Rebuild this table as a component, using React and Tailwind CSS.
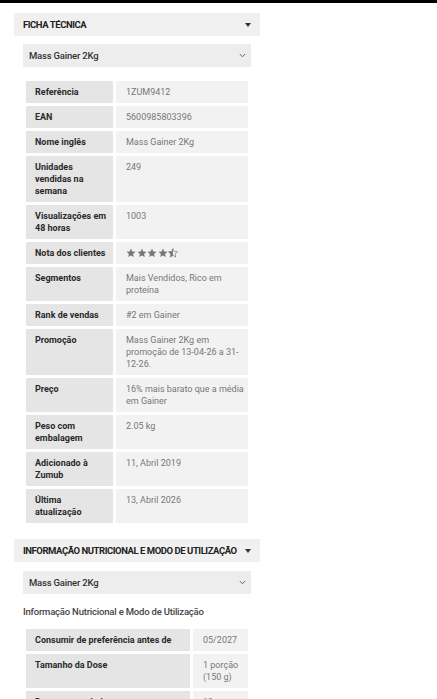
import React from "react";

const font = { fontFamily: "Roboto, 'Liberation Sans', sans-serif" };

function Caret() {
  return (
    <svg width="6" height="4" viewBox="0 0 6 4" className="shrink-0">
      <path d="M0 0 L6 0 L3 4 Z" fill="#333" />
    </svg>
  );
}

function Chevron() {
  return (
    <svg width="7" height="5" viewBox="0 0 7 5" className="shrink-0">
      <path d="M0.8 1 L3.5 3.8 L6.2 1" fill="none" stroke="#666" strokeWidth="1" />
    </svg>
  );
}

function Star({ half }) {
  const d = "M5 0.6 L6.3 3.5 L9.5 3.8 L7.1 5.9 L7.8 9.1 L5 7.4 L2.2 9.1 L2.9 5.9 L0.5 3.8 L3.7 3.5 Z";
  return (
    <svg width="10" height="10" viewBox="0 0 10 10">
      {half ? (
        <>
          <defs>
            <clipPath id="halfclip">
              <rect x="0" y="0" width="5" height="10" />
            </clipPath>
          </defs>
          <path d={d} fill="none" stroke="#888" strokeWidth="0.8" />
          <path d={d} fill="#777" clipPath="url(#halfclip)" />
        </>
      ) : (
        <path d={d} fill="#777" />
      )}
    </svg>
  );
}

function Header({ children }) {
  return (
    <div className="ml-[14px] w-[246px] h-[23px] bg-[#f0f0f0] flex items-center pl-[9px] pr-[9px]">
      <span className="flex-1 text-[9.5px] font-bold text-[#222] tracking-[-0.45px] leading-none whitespace-nowrap">{children}</span>
      <Caret />
    </div>
  );
}

function Select() {
  return (
    <div className="ml-[23px] w-[228px] h-[23px] bg-[#ededed] flex items-center justify-between pl-[6px] pr-[5px]">
      <span className="text-[9.5px] font-medium text-[#333] tracking-[-0.2px] leading-none">Mass Gainer 2Kg</span>
      <Chevron />
    </div>
  );
}

const rows = [
  ["Referência", "1ZUM9412"],
  ["EAN", "5600985803396"],
  ["Nome inglês", "Mass Gainer 2Kg"],
  [["Unidades", "vendidas na", "semana"], "249"],
  [["Visualizações em", "48 horas"], "1003"],
  ["Nota dos clientes", "STARS"],
  ["Segmentos", ["Mais Vendidos, Rico em", "proteína"]],
  ["Rank de vendas", "#2 em Gainer"],
  ["Promoção", ["Mass Gainer 2Kg em", "promoção de 13-04-26 a 31-", "12-26."]],
  ["Preço", ["16% mais barato que a média", "em Gainer"]],
  [["Peso com", "embalagem"], "2.05 kg"],
  [["Adicionado à", "Zumub"], "11, Abril 2019"],
  [["Última", "atualização"], "13, Abril 2026"],
];

function Lines({ v }) {
  if (Array.isArray(v)) return v.map((l, i) => <div key={i}>{l}</div>);
  return <div>{v}</div>;
}

export default function App() {
  return (
    <div className="w-[437px] h-[699px] bg-white overflow-hidden" style={font}>
      <div className="h-[3px] bg-black" />
      <div className="pt-[10px]">
        <Header>FICHA TÉCNICA</Header>
        <div className="mt-[8px]">
          <Select />
        </div>
        <div className="ml-[26px] mt-[14px] w-[222px] flex flex-col gap-[3px]">
          {rows.map(([k, v], i) => (
            <div key={i} className="flex gap-[3px]">
              <div className="w-[87px] shrink-0 bg-[#e5e5e5] pl-[9px] pr-[4px] py-[5px] text-[9px] leading-[12px] font-bold text-[#2a2a2a]">
                <Lines v={k} />
              </div>
              <div className="flex-1 bg-[#f2f2f2] pl-[10px] pr-[4px] py-[5px] text-[9px] leading-[12px] text-[#777]">
                {v === "STARS" ? (
                  <div className="flex items-center gap-[0.5px] h-[12px]">
                    <Star /><Star /><Star /><Star /><Star half />
                  </div>
                ) : (
                  <Lines v={v} />
                )}
              </div>
            </div>
          ))}
        </div>
        <div className="mt-[16px]">
          <Header>INFORMAÇÃO NUTRICIONAL E MODO DE UTILIZAÇÃO</Header>
        </div>
        <div className="mt-[9px]">
          <Select />
        </div>
        <div className="ml-[23px] mt-[12px] text-[9.5px] font-medium text-[#444] tracking-[-0.2px] leading-[12px]">
          Informação Nutricional e Modo de Utilização
        </div>
        <div className="ml-[26px] mt-[11px] w-[222px] flex flex-col gap-[3px]">
          <div className="flex gap-[3px]">
            <div className="w-[164px] shrink-0 bg-[#e5e5e5] pl-[9px] py-[5px] text-[9px] leading-[12px] font-bold text-[#2a2a2a]">
              Consumir de preferência antes de
            </div>
            <div className="flex-1 bg-[#f2f2f2] pl-[10px] py-[5px] text-[9px] leading-[12px] text-[#777]">05/2027</div>
          </div>
          <div className="flex gap-[3px]">
            <div className="w-[164px] shrink-0 bg-[#e5e5e5] pl-[9px] py-[5px] text-[9px] leading-[12px] font-bold text-[#2a2a2a]">
              Tamanho da Dose
            </div>
            <div className="flex-1 bg-[#f2f2f2] pl-[10px] py-[5px] text-[9px] leading-[12px] text-[#777]">
              <div>1 porção</div>
              <div>(150 g)</div>
            </div>
          </div>
          <div className="flex gap-[3px]">
            <div className="w-[164px] shrink-0 bg-[#e5e5e5] pl-[9px] py-[5px] text-[9px] leading-[12px] font-bold text-[#2a2a2a]">
              Doses por embalagem
            </div>
            <div className="flex-1 bg-[#f2f2f2] pl-[10px] py-[5px] text-[9px] leading-[12px] text-[#777]">13</div>
          </div>
        </div>
      </div>
    </div>
  );
}
